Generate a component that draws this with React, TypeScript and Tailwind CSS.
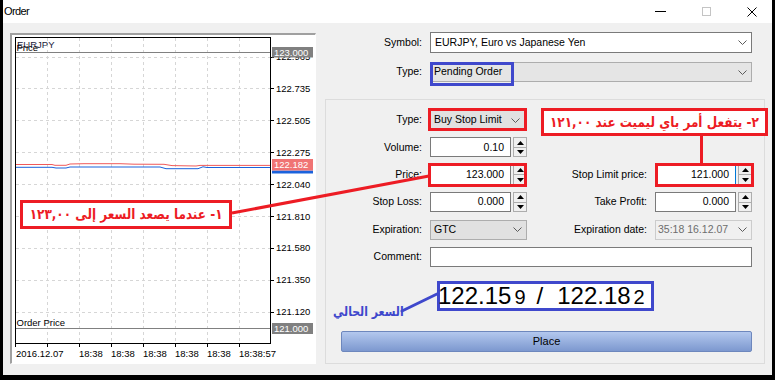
import React from "react";

const UI = "font-['Liberation_Sans',Arial,sans-serif]";
const AR = "font-['DejaVu_Sans',sans-serif]";

const GRID_Y = [56.5, 88.4, 120.3, 152.2, 184.1, 216, 247.9, 279.8, 311.7];
const PRICES = ["122.965", "122.735", "122.505", "122.275", "122.040", "121.810", "121.580", "121.350", "121.120"];
const GRID_X = [47, 79, 111, 143, 175, 207, 239];
const TIMES = ["2016.12.07", "18:38", "18:38", "18:38", "18:38", "18:38", "18:38:57"];
const ASK =
  "15,164.5 52,164.5 55,165.3 66,165.3 70,164 84,163.7 120,163.7 134,164.2 164,164.3 172,165.6 196,166 200,165.4 270,165.4";
const BID =
  "15,167.3 52,167.3 56,168 66,168 70,167 160,167 166,168.7 198,168.7 203,166.8 207,167.5 270,167.5";

function Chart() {
  const font = { fontFamily: '"Liberation Sans", Arial, sans-serif' };
  return (
    <svg width="303" height="328" viewBox="12 35 303 328" className="block" style={font}>
      {/* grid */}
      {GRID_X.map((x) => (
        <line key={x} x1={x + 0.5} y1={38} x2={x + 0.5} y2={343} stroke="#d6d6d6" strokeDasharray="3 3" />
      ))}
      {GRID_Y.map((y) => (
        <line key={y} x1={16} y1={Math.round(y) + 0.5} x2={270} y2={Math.round(y) + 0.5} stroke="#d6d6d6" strokeDasharray="3 3" />
      ))}

      {/* order price lines */}
      <line x1={15} y1={52.5} x2={270} y2={52.5} stroke="#808080" />
      <line x1={15} y1={328.5} x2={270} y2={328.5} stroke="#808080" />

      {/* bid / ask */}
      <polyline points={ASK} fill="none" stroke="#f05a5a" />
      <polyline points={BID} fill="none" stroke="#1a62dc" />

      {/* frame */}
      <line x1={15.5} y1={37} x2={15.5} y2={347} stroke="#000" />
      <line x1={15} y1={37.5} x2={271} y2={37.5} stroke="#000" />
      <line x1={270.5} y1={37} x2={270.5} y2={344} stroke="#000" />
      <line x1={15} y1={343.5} x2={271} y2={343.5} stroke="#000" />
      {GRID_X.map((x) => (
        <line key={x} x1={x + 0.5} y1={343} x2={x + 0.5} y2={347} stroke="#000" />
      ))}
      {GRID_Y.map((y) => (
        <line key={y} x1={270} y1={Math.round(y) + 0.5} x2={274} y2={Math.round(y) + 0.5} stroke="#000" />
      ))}

      {/* price scale */}
      {PRICES.map((p, i) => (
        <text key={p} x={276} y={GRID_Y[i] + 3.5} fontSize="9.5" fill="#000">
          {p}
        </text>
      ))}
      <rect x={272} y={47} width={41} height={10.5} fill="#808080" />
      <text x={274} y={55.8} fontSize="9.5" fill="#fff">123.000</text>
      <rect x={272} y={323} width={41} height={11} fill="#808080" />
      <text x={274} y={332} fontSize="9.5" fill="#fff">121.000</text>
      <rect x={272} y={170.5} width={41} height={3} fill="#1a62dc" />
      <rect x={272} y={159} width={41} height={11.5} fill="#f07474" />
      <text x={274} y={168.3} fontSize="9.5" fill="#fff">122.182</text>

      {/* time scale */}
      {TIMES.map((t, i) => (
        <text key={i} x={i === 0 ? 16 : GRID_X[i]} y={357} fontSize="9.5" fill="#000">
          {t}
        </text>
      ))}

      {/* captions */}
      <text x={17} y={48} fontSize="9.5" fill="#1c1c3c">EURJPY</text>
      <text x={16.5} y={50.5} fontSize="9.5" fill="#000">Price</text>
      <text x={16.5} y={326} fontSize="9.5" fill="#000">Order Price</text>
    </svg>
  );
}

function Chevron({ color = "#5a5a5a" }: { color?: string }) {
  return (
    <svg width="9" height="5" viewBox="0 0 9 5" className="shrink-0">
      <path d="M0.5 0.5 L4.5 4.5 L8.5 0.5" fill="none" stroke={color} strokeWidth="1" />
    </svg>
  );
}

function Select({
  value,
  className,
}: {
  value: string;
  className: string;
}) {
  return (
    <div className={`h-[20px] border flex items-center justify-between pr-[4px] ${className}`}>
      <span className="whitespace-nowrap">{value}</span>
      <Chevron />
    </div>
  );
}

function Spin() {
  return (
    <div className="ml-[2px] w-[14px] h-[20px] border border-[#adadad] bg-[#f0f0f0] flex flex-col">
      <div className="flex-1 flex items-center justify-center border-b border-[#adadad]">
        <svg width="7" height="4" viewBox="0 0 7 4">
          <path d="M3.5 0 L7 4 L0 4Z" fill="#000" />
        </svg>
      </div>
      <div className="flex-1 flex items-center justify-center">
        <svg width="7" height="4" viewBox="0 0 7 4">
          <path d="M0 0 L7 0 L3.5 4Z" fill="#000" />
        </svg>
      </div>
    </div>
  );
}

function Num({ value, focus }: { value: string; focus?: boolean }) {
  return (
    <div className="flex">
      <div
        className={`h-[20px] bg-white border border-[#7a7a7a] flex items-center justify-end pr-[6px] ${
          focus ? "w-[81px] border-r-[#0078d7]" : "w-[81px]"
        }`}
      >
        {value}
      </div>
      <Spin />
    </div>
  );
}

function Label({ children, className }: { children: React.ReactNode; className: string }) {
  return <div className={`text-right whitespace-nowrap ${className}`}>{children}</div>;
}

function OrderForm() {
  return (
    <div className="ml-[9px] w-[440px] pt-[9px] flex flex-col">
      <div className="flex items-center h-[21px]">
        <Label className="w-[97px]">Symbol:</Label>
        <Select value="EURJPY, Euro vs Japanese Yen" className="ml-[8px] w-[322px] h-[21px] bg-white border-[#7a7a7a] pl-[4px]" />
      </div>
      <div className="flex items-center h-[20px] mt-[9px]">
        <Label className="w-[97px]">Type:</Label>
        <Select value="Pending Order" className="ml-[8px] w-[322px] bg-[#e5e5e5] border-[#adadad] pl-[3px]" />
      </div>

      <div className="mt-[17px] h-[265px] border border-[#dcdcdc] pt-[10px] flex flex-col">
        <div className="flex flex-col gap-[7.4px]">
          <div className="flex items-center h-[20px]">
            <Label className="w-[96px]">Type:</Label>
            <Select value="Buy Stop Limit" className="ml-[8px] w-[95px] bg-[#e1e1e1] border-[#adadad] pl-[3px]" />
          </div>
          <div className="flex items-center h-[20px]">
            <Label className="w-[96px]">Volume:</Label>
            <div className="ml-[8px]">
              <Num value="0.10" />
            </div>
          </div>
          <div className="flex items-center h-[20px]">
            <Label className="w-[96px]">Price:</Label>
            <div className="ml-[8px] w-[97px]">
              <Num value="123.000" />
            </div>
            <Label className="w-[120px]">Stop Limit price:</Label>
            <div className="ml-[8px]">
              <Num value="121.000" focus />
            </div>
          </div>
          <div className="flex items-center h-[20px]">
            <Label className="w-[96px]">Stop Loss:</Label>
            <div className="ml-[8px] w-[97px]">
              <Num value="0.000" />
            </div>
            <Label className="w-[120px]">Take Profit:</Label>
            <div className="ml-[8px]">
              <Num value="0.000" />
            </div>
          </div>
          <div className="flex items-center h-[20px]">
            <Label className="w-[96px]">Expiration:</Label>
            <Select value="GTC" className="ml-[8px] w-[97px] bg-[#e1e1e1] border-[#adadad] pl-[3px]" />
            <Label className="w-[120px]">Expiration date:</Label>
            <Select
              value="35:18 16.12.07"
              className="ml-[8px] w-[97px] bg-[#f0f0f0] border-[#cccccc] text-[#6d6d6d] pl-[2px]"
            />
          </div>
          <div className="flex items-center h-[20px]">
            <Label className="w-[96px]">Comment:</Label>
            <div className="ml-[8px] w-[322px] h-[20px] bg-white border border-[#7a7a7a]" />
          </div>
        </div>

        {/* bid / ask */}
        <div className="mt-[14px] ml-[111px] w-[217px] h-[30px] border-[3px] border-[#3f48cc] bg-white flex items-baseline leading-[24px] text-[24px] text-black">
          <span className="ml-[-2px]">122.15</span>
          <span className="ml-[3px] text-[20px]">9</span>
          <span className="ml-[11px]">/</span>
          <span className="ml-[14px]">122.18</span>
          <span className="ml-[3px] text-[20px]">2</span>
        </div>

        <div className="mt-[20px] ml-[15px] w-[411px] h-[21px] rounded-[2px] border border-[#6d87bd] bg-gradient-to-b from-[#b3c8ee] to-[#7d98cf] flex items-center justify-center text-[11px]">
          Place
        </div>
      </div>
    </div>
  );
}

function TitleBar() {
  return (
    <div className="h-[23px] bg-white flex items-center">
      <span className="pl-[1px] text-[11px] tracking-[-0.6px]">Order</span>
      <div className="ml-auto flex h-full">
        <div className="w-[46px] flex items-center justify-center">
          <div className="w-[11px] h-px bg-black" />
        </div>
        <div className="w-[46px] flex items-center justify-center">
          <div className="w-[9px] h-[9px] border border-[#c4c4c4]" />
        </div>
        <div className="w-[43px] flex items-center pl-[18px]">
          <svg width="10" height="10" viewBox="0 0 10 10">
            <path d="M0.5 0.5 L9.5 9.5 M9.5 0.5 L0.5 9.5" stroke="#000" strokeWidth="1" />
          </svg>
        </div>
      </div>
    </div>
  );
}

function Annotations() {
  return (
    <>
      <svg className="absolute left-0 top-0 pointer-events-none" width="775" height="380">
        <line x1="232" y1="213" x2="429" y2="176" stroke="#ed1c24" strokeWidth="3" />
        <line x1="701.5" y1="135" x2="701.5" y2="164" stroke="#ed1c24" strokeWidth="3" />
        <line x1="402" y1="311" x2="437" y2="294" stroke="#3f48cc" strokeWidth="3" strokeLinecap="round" />
      </svg>

      {/* highlighted fields */}
      <div className="absolute left-[430px] top-[62px] w-[84px] h-[24px] border-[3px] border-[#3f48cc]" />
      <div className="absolute left-[428px] top-[108px] w-[99px] h-[23px] border-[3px] border-[#ed1c24]" />
      <div className="absolute left-[428px] top-[163px] w-[99px] h-[24px] border-[3px] border-[#ed1c24]" />
      <div className="absolute left-[655px] top-[163px] w-[99px] h-[24px] border-[3px] border-[#ed1c24]" />

      {/* notes */}
      <div
        className={`absolute left-[20px] top-[200px] w-[212px] h-[29px] border-[3px] border-[#ed1c24] bg-white flex items-center justify-center overflow-hidden text-[#ed1c24] font-bold text-[14px] whitespace-nowrap ${AR}`}
      >
        <span dir="rtl" className="inline-block scale-x-[0.86]">
          ١- عندما يصعد السعر إلى ١٢٣,٠٠
        </span>
      </div>
      <div
        className={`absolute left-[541px] top-[108px] w-[227px] h-[28px] border-[3px] border-[#ed1c24] bg-white flex items-center justify-center overflow-hidden text-[#ed1c24] font-bold text-[14px] whitespace-nowrap ${AR}`}
      >
        <span dir="rtl" className="inline-block scale-x-[0.86]">
          ٢- يتفعل أمر باي ليميت عند ١٢١,٠٠
        </span>
      </div>
      <div
        dir="rtl"
        className={`absolute left-[333px] top-[302px] origin-left scale-x-[0.84] text-[#3f48cc] font-bold text-[13px] whitespace-nowrap ${AR}`}
      >
        السعر الحالي
      </div>
    </>
  );
}

export default function App() {
  return (
    <div className={`relative w-[775px] h-[380px] bg-black pl-[3px] pr-[3px] pb-[5px] overflow-hidden text-[10.5px] text-black ${UI}`}>
      <div className="flex flex-col h-full bg-[#f0f0f0]">
        <TitleBar />
        <div className="flex flex-1">
          <div className="ml-[7px] mt-[10px] w-[306px] h-[331px] bg-white border-t-2 border-l-2 border-t-[#a0a0a0] border-l-[#a0a0a0] border-r border-b border-r-white border-b-white">
            <Chart />
          </div>
          <OrderForm />
        </div>
      </div>
      <Annotations />
    </div>
  );
}
